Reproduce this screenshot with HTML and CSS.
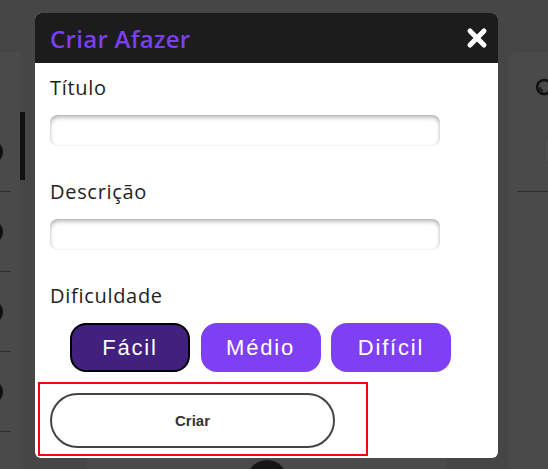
FILE: index.html
```html
<!DOCTYPE html>
<html lang="pt-BR">
<head>
<meta charset="utf-8">
<title>Criar Afazer</title>
<link rel="stylesheet" href="styles.css">
</head>
<body>
<div class="board">
  <section class="col col-left">
    <div class="list">
      <div class="task"><span class="check"></span></div>
      <div class="task"><span class="check"></span></div>
      <div class="task"><span class="check"></span></div>
      <div class="task"><span class="check"></span></div>
    </div>
    <div class="track"><div class="thumb"></div></div>
  </section>
  <section class="col col-mid">
    <span class="fab"></span>
  </section>
  <section class="col col-right">
    <div class="r-head">
      <svg class="r-icon" width="18" height="18" viewBox="0 0 18 18"><path d="M14.5 4.5 A7 7 0 1 0 15.5 12" fill="none" stroke="#111" stroke-width="2.6"/><path d="M5 9 A4 4 0 0 0 8 13" fill="none" stroke="#111" stroke-width="1.4"/></svg>
    </div>
    <div class="r-box"></div>
    <div class="r-divider"></div>
  </section>
</div>

<div class="overlay">
  <div class="modal" role="dialog" aria-labelledby="modal-title">
    <header class="modal-head">
      <h2 class="modal-title" id="modal-title">Criar Afazer</h2>
      <button class="close" aria-label="Fechar">
        <svg width="22" height="22" viewBox="0 0 22 22"><path d="M4 4 L18 18 M18 4 L4 18" stroke="#fff" stroke-width="5" stroke-linecap="round"/></svg>
      </button>
    </header>
    <form class="modal-body">
      <label class="label" for="titulo">Título</label>
      <input class="input" id="titulo" type="text">
      <label class="label" for="descricao">Descrição</label>
      <input class="input" id="descricao" type="text">
      <span class="label">Dificuldade</span>
      <div class="levels">
        <button type="button" class="level active">Fácil</button>
        <button type="button" class="level">Médio</button>
        <button type="button" class="level">Difícil</button>
      </div>
      <div class="submit-zone">
        <button type="submit" class="submit">Criar</button>
      </div>
    </form>
  </div>
</div>
</body>
</html>
```
FILE: styles.css
```css
html, body {
  margin: 0;
  height: 469px;
  overflow: hidden;
}
body {
  background: #464646;
  font-family: "Open Sans", "Noto Sans", sans-serif;
}

.board {
  display: flex;
  gap: 61px;
  padding-top: 52px;
}
.col {
  flex: none;
  background: #4a4a4a;
  height: 417px;
  overflow: hidden;
}
.col-left {
  width: 25px;
  display: flex;
  border-top-right-radius: 8px;
}
.list {
  flex: 1;
  min-width: 0;
  padding-top: 60px;
}
.task {
  height: 79px;
  margin-right: 9px;
  border-bottom: 1px solid #2e2e2e;
  display: flex;
  align-items: center;
  justify-content: flex-end;
}
.check {
  flex: none;
  width: 26px;
  height: 26px;
  border-radius: 50%;
  background: #111;
  margin-right: 8px;
}
.track {
  width: 5px;
  background: #474747;
}
.thumb {
  margin-top: 60px;
  height: 68px;
  background: #111;
}
.col-mid {
  width: 361px;
  display: flex;
  justify-content: center;
  padding-top: 408px;
  box-sizing: border-box;
  border-radius: 8px 8px 0 0;
}
.fab {
  flex: none;
  width: 40px;
  height: 40px;
  border-radius: 50%;
  background: #161616;
}
.col-right {
  width: 40px;
  padding: 26px 0 0 9px;
  box-sizing: border-box;
  border-top-left-radius: 8px;
}
.r-head {
  padding-left: 18px;
  height: 18px;
}
.r-icon { display: block; }
.r-box {
  margin: 39px 0 0 28px;
  width: 60px;
  height: 30px;
  border-radius: 6px;
  background: #4f4f4f;
  border: 1px solid #444;
  box-sizing: border-box;
}
.r-divider {
  margin-top: 26px;
  border-top: 1px solid #2e2e2e;
}

/* overlay + modal */
.overlay {
  position: fixed;
  inset: 0;
  display: flex;
  align-items: flex-start;
  padding: 13px 0 0 35px;
}
.modal {
  width: 463px;
  background: #fff;
  border-radius: 6px;
  overflow: hidden;
}
.modal-head {
  height: 50px;
  background: #1c1c1c;
  display: flex;
  align-items: center;
  justify-content: space-between;
  padding: 0 10px 0 15px;
}
.modal-title {
  margin: 0;
  color: #7b3ff2;
  font-size: 24px;
  font-weight: 600;
  letter-spacing: 0.3px;
}
.close {
  border: none;
  background: none;
  padding: 0;
  display: flex;
}
.modal-body {
  display: block;
  padding: 11px 15px 2px;
}
.label {
  display: block;
  font-size: 20px;
  line-height: 28px;
  letter-spacing: 0.7px;
  color: #222;
}
.input {
  display: block;
  width: 390px;
  height: 31px;
  margin: 13px 0 32px;
  padding: 0 10px;
  box-sizing: border-box;
  border: none;
  border-radius: 8px;
  background: #fff;
  box-shadow: inset 0 3px 5px -1px rgba(0, 0, 0, 0.32), inset 0 0 3px rgba(0, 0, 0, 0.1);
  outline: none;
}
.levels {
  display: flex;
  gap: 10.5px;
  padding-left: 20px;
  margin-top: 13px;
}
.level {
  width: 120px;
  height: 49px;
  box-sizing: border-box;
  border: none;
  border-radius: 16px;
  background: #7f3ff4;
  color: #fff;
  font-family: "Liberation Sans", Arial, sans-serif;
  font-size: 22px;
  letter-spacing: 1.8px;
  padding: 0;
}
.level.active {
  background: #42207e;
  border: 2.5px solid #000;
}
.submit-zone {
  margin: 10px 0 0 -12px;
  width: 330px;
  box-sizing: border-box;
  border: 2px solid #f00;
  padding: 9px 31px 6px 10px;
}
.submit {
  display: block;
  width: 285px;
  height: 55px;
  box-sizing: border-box;
  border: 2px solid #444;
  border-radius: 28px;
  background: #fff;
  color: #333;
  font-family: "Liberation Sans", Arial, sans-serif;
  font-size: 15px;
  font-weight: bold;
}
```
